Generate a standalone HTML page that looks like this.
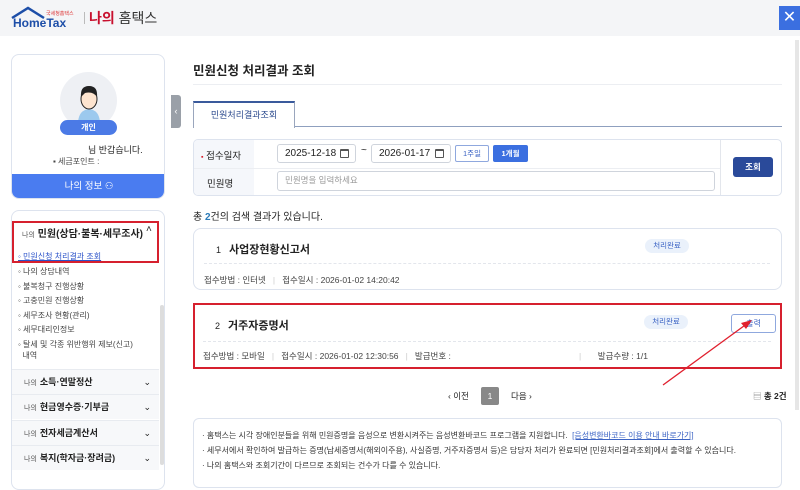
<!DOCTYPE html>
<html><head><meta charset="utf-8"><style>
*{box-sizing:border-box;margin:0;padding:0}
body{width:800px;height:482px;overflow:hidden;background:#fff;font-family:"Liberation Sans","Noto Sans CJK KR",sans-serif;color:#222;position:relative}
.a{position:absolute}
.hdr{left:0;top:0;width:800px;height:36px;background:#f4f5f7}
.card{border:1px solid #dde3ee;border-radius:8px;background:#fff}
.inp{border:1px solid #cfd4dc;border-radius:3px;background:#fff;font-size:10px;color:#222;padding-left:7px;line-height:17px}
.cal{position:absolute;right:6px;top:4px;width:9px;height:9px;border:1px solid #555;border-top-width:2px;border-radius:1px}
.mi{font-size:8px;color:#444;left:18px}
.mh{left:12px;width:147px;height:25px;border-top:1px solid #e8ebf0;background:#f7f8fa;font-size:9px;font-weight:bold;padding-left:12px;line-height:25px}
.mh small{font-size:7px;font-weight:normal;color:#555;margin-right:3px}
.mh i{position:absolute;right:8px;top:0;font-style:normal;font-weight:normal;font-size:9px}
.sm{font-size:8.5px;color:#444}
</style></head><body>
<div class="a hdr"></div>
<svg class="a" style="left:10px;top:5px" width="72" height="24"><path d="M2 13 L18 3 L34 13" fill="none" stroke="#1d4ea8" stroke-width="2.5"/><text x="3" y="22" font-family="Liberation Sans" font-weight="bold" font-size="12" fill="#1d4ea8">HomeTax</text><text x="36" y="10" font-size="5" fill="#d33" font-family="Noto Sans CJK KR">국세청홈택스</text></svg>
<div class="a" style="left:84px;top:12px;width:1px;height:12px;background:#bbb"></div>
<div class="a" style="left:89px;top:8px;font-size:14px;font-weight:bold;color:#c8102e">나의 <span style="color:#333;font-weight:normal">홈택스</span></div>
<div class="a" style="left:779px;top:6px;width:21px;height:24px;background:#3b6fe0;color:#fff;font-size:16px;text-align:center;line-height:23px">✕</div>

<div class="a card" style="left:11px;top:54px;width:154px;height:145px;overflow:hidden">
 <div class="a" style="left:48px;top:17px;width:57px;height:57px;border-radius:50%;background:#eef0f4"></div>
 <svg class="a" style="left:63px;top:27px" width="28" height="40"><path d="M3 40 Q4 28 14 27 Q24 28 25 40Z" fill="#9cc9ee"/><ellipse cx="14" cy="17" rx="8" ry="10" fill="#fde4cf" stroke="#222" stroke-width="1"/><path d="M6 15 Q5 4 14 4 Q23 4 22 15 Q18 9 10 11Z" fill="#222"/></svg>
 <div class="a" style="left:48px;top:65px;width:57px;height:15px;border-radius:8px;background:#4b7ae6;color:#fff;font-size:8px;text-align:center;line-height:15px;font-weight:bold">개인</div>
 <div class="a" style="left:76px;top:88px;font-size:9px">님 반갑습니다.</div>
 <div class="a" style="left:41px;top:101px;font-size:8px;color:#444">▪ 세금포인트 :</div>
 <div class="a" style="left:0;top:119px;width:154px;height:26px;background:#4a7cf0;color:#fff;font-size:9.5px;text-align:center;line-height:26px">나의 정보 ⚇</div>
</div>

<div class="a card" style="left:11px;top:210px;width:154px;height:280px;border-radius:8px"></div>
<div class="a" style="left:160px;top:305px;width:4px;height:160px;background:#ddd;border-radius:2px"></div>
<div class="a" style="left:12px;top:221px;width:147px;height:42px;border:2px solid #d6202e"></div>
<div class="a" style="left:22px;top:225px;font-size:10px;font-weight:bold"><span style="font-size:7px;font-weight:normal;color:#555">나의</span> 민원(상담·불복·세무조사)</div>
<div class="a" style="left:146px;top:224px;font-size:10px">˄</div>
<div class="a mi" style="top:251px;color:#2a52c9;text-decoration:underline">◦ 민원신청 처리결과 조회</div>
<div class="a mi" style="top:266px">◦ 나의 상담내역</div>
<div class="a mi" style="top:281px">◦ 불복청구 진행상황</div>
<div class="a mi" style="top:295px">◦ 고충민원 진행상황</div>
<div class="a mi" style="top:310px">◦ 세무조사 현황(관리)</div>
<div class="a mi" style="top:324px">◦ 세무대리인정보</div>
<div class="a mi" style="top:339px">◦ 탈세 및 각종 위반행위 제보(신고)<br>&nbsp;&nbsp;내역</div>
<div class="a mh" style="top:369px"><small>나의</small>소득·연말정산<i>⌄</i></div>
<div class="a mh" style="top:394px"><small>나의</small>현금영수증·기부금<i>⌄</i></div>
<div class="a mh" style="top:420px"><small>나의</small>전자세금계산서<i>⌄</i></div>
<div class="a mh" style="top:445px"><small>나의</small>복지(학자금·장려금)<i>⌄</i></div>

<div class="a" style="left:171px;top:95px;width:10px;height:33px;background:#9aa0a8;border-radius:0 3px 3px 0;color:#fff;font-size:9px;line-height:33px;text-align:center">‹</div>
<div class="a" style="left:193px;top:60px;font-size:12.5px;font-weight:bold">민원신청 처리결과 조회</div>
<div class="a" style="left:193px;top:84px;width:589px;height:1px;background:#eceef2"></div>
<div class="a" style="left:193px;top:126px;width:589px;height:1px;background:#8fa0bf"></div>
<div class="a" style="left:193px;top:101px;width:102px;height:27px;background:#fff;border:1px solid #9aa6bd;border-top:2px solid #3a5a9c;border-bottom:none;font-size:9px;color:#2e4c8f;text-align:center;line-height:24px">민원처리결과조회</div>

<div class="a card" style="left:193px;top:139px;width:589px;height:57px;border-radius:5px;overflow:hidden">
 <div class="a" style="left:0;top:0;width:60px;height:57px;background:#f5f7fb"></div>
 <div class="a" style="left:526px;top:0;width:1px;height:57px;background:#e3e6ec"></div>
 <div class="a" style="left:0;top:28px;width:526px;height:1px;background:#eceef2"></div>
 <div class="a" style="left:7px;top:8px;font-size:9.5px"><span style="color:#d6202e;font-size:7px">▪</span> 접수일자</div>
 <div class="a" style="left:13px;top:36px;font-size:9.5px">민원명</div>
</div>
<div class="a inp" style="left:277px;top:144px;width:79px;height:19px">2025-12-18<span class="cal"></span></div>
<div class="a" style="left:361px;top:145px;font-size:10px">~</div>
<div class="a inp" style="left:371px;top:144px;width:80px;height:19px">2026-01-17<span class="cal"></span></div>
<div class="a" style="left:455px;top:145px;width:34px;height:17px;border:1px solid #8fa8de;border-radius:2px;font-size:7.5px;color:#3b63c4;text-align:center;line-height:15px">1주일</div>
<div class="a" style="left:493px;top:145px;width:35px;height:17px;background:#3b6fe0;border-radius:2px;font-size:7.5px;color:#fff;text-align:center;line-height:17px;font-weight:bold">1개월</div>
<div class="a" style="left:733px;top:157px;width:40px;height:20px;background:#2a4a9a;border-radius:3px;font-size:8.5px;color:#fff;text-align:center;line-height:20px;font-weight:bold">조회</div>
<div class="a inp" style="left:277px;top:171px;width:438px;height:20px;color:#999;font-size:8.5px">민원명을 입력하세요</div>

<div class="a" style="left:193px;top:208px;font-size:10px">총 <span style="color:#2a7ab8;font-weight:bold">2</span>건의 검색 결과가 있습니다.</div>

<div class="a card" style="left:193px;top:228px;width:589px;height:62px">
 <div class="a" style="left:22px;top:12px;font-size:11px;font-weight:bold"><span style="font-weight:normal;font-size:9px;margin-right:8px">1</span>사업장현황신고서</div>
 <div class="a" style="left:451px;top:10px;width:44px;height:14px;background:#eaf1fb;border-radius:7px;font-size:7.5px;color:#3b63c4;text-align:center;line-height:14px">처리완료</div>
 <div class="a" style="left:10px;top:34px;width:566px;border-top:1px dashed #e3e6ec"></div>
 <div class="a sm" style="left:10px;top:45px">접수방법 : 인터넷 &nbsp;&nbsp;<span style="color:#ccc">|</span>&nbsp;&nbsp; 접수일시 : 2026-01-02 14:20:42</div>
</div>

<div class="a" style="left:193px;top:303px;width:589px;height:66px;border:2px solid #d6202e;background:#fff">
 <div class="a" style="left:20px;top:12px;font-size:11px;font-weight:bold"><span style="font-weight:normal;font-size:9px;margin-right:8px">2</span>거주자증명서</div>
 <div class="a" style="left:449px;top:10px;width:44px;height:14px;background:#eaf1fb;border-radius:7px;font-size:7.5px;color:#3b63c4;text-align:center;line-height:14px">처리완료</div>
 <div class="a" style="left:536px;top:9px;width:45px;height:19px;border:1px solid #8fa8de;border-radius:3px;font-size:8px;color:#3b63c4;text-align:center;line-height:17px">출력</div>
 <div class="a" style="left:8px;top:36px;width:568px;border-top:1px dashed #e3e6ec"></div>
 <div class="a sm" style="left:8px;top:45px">접수방법 : 모바일 &nbsp;&nbsp;<span style="color:#ccc">|</span>&nbsp;&nbsp; 접수일시 : 2026-01-02 12:30:56 &nbsp;&nbsp;<span style="color:#ccc">|</span>&nbsp;&nbsp; 발급번호 :</div>
 <div class="a sm" style="left:384px;top:45px"><span style="color:#ccc">|</span>&nbsp;&nbsp;&nbsp;&nbsp;&nbsp;&nbsp; 발급수량 : 1/1</div>
</div>
<svg class="a" style="left:660px;top:318px" width="100" height="70"><line x1="3" y1="67" x2="88" y2="5" stroke="#e0202e" stroke-width="1.3"/><path d="M92 2 L81 5 L86 11Z" fill="#e0202e"/></svg>

<div class="a" style="left:448px;top:390px;font-size:8.5px">‹ 이전</div>
<div class="a" style="left:481px;top:387px;width:18px;height:18px;background:#888;border-radius:2px;color:#fff;font-size:8.5px;text-align:center;line-height:18px">1</div>
<div class="a" style="left:511px;top:390px;font-size:8.5px">다음 ›</div>
<div class="a" style="left:753px;top:390px;font-size:8.5px;font-weight:bold"><span style="font-weight:normal;color:#888">▤</span> 총 2건</div>

<div class="a card" style="left:193px;top:418px;width:589px;height:70px;border-radius:6px">
 <div class="a" style="left:8px;top:9px;font-size:8px;color:#333;line-height:15px;white-space:nowrap">· 홈택스는 시각 장애인분들을 위해 민원증명을 음성으로 변환시켜주는 음성변환바코드 프로그램을 지원합니다. &nbsp;<span style="color:#3b63c4;text-decoration:underline">[음성변환바코드 이용 안내 바로가기]</span><br>· 세무서에서 확인하여 발급하는 증명(납세증명서(해외이주용), 사실증명, 거주자증명서 등)은 담당자 처리가 완료되면 [민원처리결과조회]에서 출력할 수 있습니다.<br>· 나의 홈택스와 조회기간이 다르므로 조회되는 건수가 다를 수 있습니다.</div>
</div>
<div class="a" style="left:795px;top:40px;width:4px;height:370px;background:#e6e6e6"></div>
</body></html>
